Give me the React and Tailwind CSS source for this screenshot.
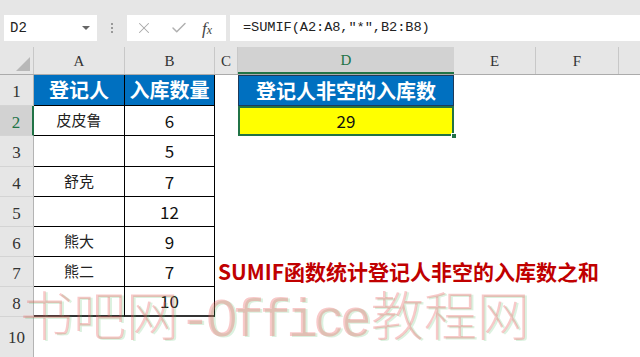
import React from "react";
import { X, Check } from "lucide-react";

const CJK = "font-['Noto_Sans_CJK_SC','Noto_Sans',sans-serif]";
const SERIF = "font-['Liberation_Serif',serif]";

const rows = [
  { n: "1", h: "h-[31px]", a: "登记人", b: "入库数量", head: true },
  { n: "2", h: "h-[30px]", a: "皮皮鲁", b: "6", sel: true },
  { n: "3", h: "h-[31px]", a: "", b: "5" },
  { n: "4", h: "h-[30px]", a: "舒克", b: "7" },
  { n: "5", h: "h-[30px]", a: "", b: "12" },
  { n: "6", h: "h-[30px]", a: "熊大", b: "9" },
  { n: "7", h: "h-[30px]", a: "熊二", b: "7", caption: true },
  { n: "8", h: "h-[30px]", a: "", b: "10", last: true },
];

function RowHead({ n, sel }) {
  return (
    <div
      className={`w-[34px] shrink-0 flex items-center justify-center ${SERIF} text-[17px] pt-[4px] border-b border-[#d4d4d4] ${
        sel
          ? "bg-[#d2d2d2] text-[#217346] border-r-2 border-r-[#217346]"
          : "bg-[#e6e6e6] text-[#333] border-r border-r-[#b4b4b4]"
      }`}
    >
      {n}
    </div>
  );
}

function DataRow({ r }) {
  const bottom = r.last ? "border-b-2 border-b-[#333]" : "border-b border-b-black";
  return (
    <div className={`flex ${r.h}`}>
      <RowHead n={r.n} sel={r.sel} />
      <div
        className={`w-[91px] shrink-0 flex items-center justify-center border-r border-black ${bottom} ${
          r.head
            ? `bg-[#0070c0] text-white font-bold text-[20px] ${CJK}`
            : `bg-white text-[#222] text-[15px] ${CJK}`
        }`}
      >
        {r.a}
      </div>
      <div
        className={`w-[90px] shrink-0 flex items-center justify-center border-r border-black ${bottom} ${
          r.head
            ? `bg-[#0070c0] text-white font-bold text-[20px] ${CJK}`
            : `bg-white text-[#111] text-[17px] ${CJK}`
        }`}
      >
        {r.b}
      </div>
      <div className="w-[23px] shrink-0 relative flex items-center">
        {r.caption && (
          <span
            className={`absolute left-[3px] whitespace-nowrap text-[21px] font-bold text-[#c00000] ${CJK}`}
          >
            SUMIF函数统计登记人非空的入库数之和
          </span>
        )}
      </div>
      {r.head ? (
        <div
          className={`w-[216px] shrink-0 flex items-center justify-center bg-[#0070c0] text-white font-bold text-[20px] border border-[#1e3a5a] ${CJK}`}
        >
          登记人非空的入库数
        </div>
      ) : r.sel ? (
        <div
          className={`w-[216px] shrink-0 relative flex items-center justify-center bg-[#ffff00] text-[#111] text-[17px] border-2 border-[#217346] ${CJK}`}
        >
          29
          <div className="absolute right-[-5px] bottom-[-5px] w-[6px] h-[6px] bg-[#217346] border border-white" />
        </div>
      ) : (
        <div className="w-[216px] shrink-0" />
      )}
      <div className="flex-1 bg-white" />
    </div>
  );
}

export default function App() {
  return (
    <div className="w-[640px] h-[357px] overflow-hidden bg-white relative select-none">
      {/* Formula toolbar */}
      <div className="h-[47px] bg-[#e6e6e6] flex items-start pt-[15px] pl-[4px]">
        <div className="w-[93px] h-[26px] bg-white flex items-center pl-[6px] pr-[6px] justify-between">
          <span className="font-['Liberation_Mono',monospace] text-[14px] text-[#222]">D2</span>
          <span className="w-0 h-0 border-l-[4px] border-r-[4px] border-t-[4px] border-l-transparent border-r-transparent border-t-[#666] mr-[1px]" />
        </div>
        <div className="w-[30px] h-[26px] flex flex-col items-center justify-center gap-[2px]">
          <span className="w-[2px] h-[2px] bg-[#999]" />
          <span className="w-[2px] h-[2px] bg-[#999]" />
          <span className="w-[2px] h-[2px] bg-[#999]" />
        </div>
        <div className="w-[99px] h-[26px] bg-white flex items-center pl-[8px]">
          <X size={18} strokeWidth={1.4} className="text-[#a8a8a8]" />
          <Check size={18} strokeWidth={2} className="text-[#b0b0b0] ml-[17px]" />
          <span className={`ml-[14px] ${SERIF} italic text-[17px] text-[#444] leading-none`}>
            f<span className="text-[12px]">x</span>
          </span>
        </div>
        <div className="ml-[4px] flex-1 h-[26px] bg-white flex items-center pl-[13px]">
          <span className="font-['Liberation_Mono',monospace] text-[13.7px] text-[#222] tracking-[-0.1px]">
            =SUMIF(A2:A8,″*″,B2:B8)
          </span>
        </div>
      </div>

      {/* Column headers */}
      <div className={`flex h-[28px] bg-[#e6e6e6] border-b border-[#ababab] ${SERIF} text-[15px] text-[#333]`}>
        <div className="w-[34px] shrink-0 relative border-r border-[#c8c8c8]">
          <div className="absolute right-[3px] bottom-[3px] w-0 h-0 border-b-[14px] border-l-[14px] border-b-[#b8b8b8] border-l-transparent" />
        </div>
        <div className="w-[91px] shrink-0 flex items-center justify-center border-r border-[#c8c8c8] pt-[2px]">A</div>
        <div className="w-[90px] shrink-0 flex items-center justify-center border-r border-[#c8c8c8] pt-[2px]">B</div>
        <div className="w-[23px] shrink-0 flex items-center justify-center border-r border-[#c8c8c8] pt-[2px]">C</div>
        <div className="w-[216px] shrink-0 flex items-center justify-center bg-[#d2d2d2] text-[#217346] border-b-2 border-[#217346] pt-[2px]">D</div>
        <div className="w-[82px] shrink-0 flex items-center justify-center border-r border-[#c8c8c8] pt-[2px]">E</div>
        <div className="w-[83px] shrink-0 flex items-center justify-center border-r border-[#c8c8c8] pt-[2px]">F</div>
        <div className="flex-1" />
      </div>

      {/* Rows */}
      {rows.map((r) => (
        <DataRow key={r.n} r={r} />
      ))}
      <div className="flex h-[40px]">
        <div className={`w-[34px] shrink-0 flex items-start justify-center pt-[8px] ${SERIF} text-[17px] bg-[#e6e6e6] text-[#333] border-r border-[#b4b4b4]`}>
          10
        </div>
        <div className="flex-1 bg-white" />
      </div>

      {/* Watermark */}
      <div
        className="absolute left-[20px] top-[287px] whitespace-nowrap text-[53px] leading-none text-[rgba(235,90,90,0.33)] [text-shadow:2px_1px_0_rgba(90,190,110,0.22)] pointer-events-none"
      >
        <span className="font-['Noto_Sans_CJK_SC',serif] font-light">书吧网</span>
        <span className="font-['Liberation_Mono',monospace] tracking-[-5px]">-Office</span>
        <span className="font-['Noto_Sans_CJK_SC',serif] font-light ml-[4px]">教程网</span>
      </div>
    </div>
  );
}
